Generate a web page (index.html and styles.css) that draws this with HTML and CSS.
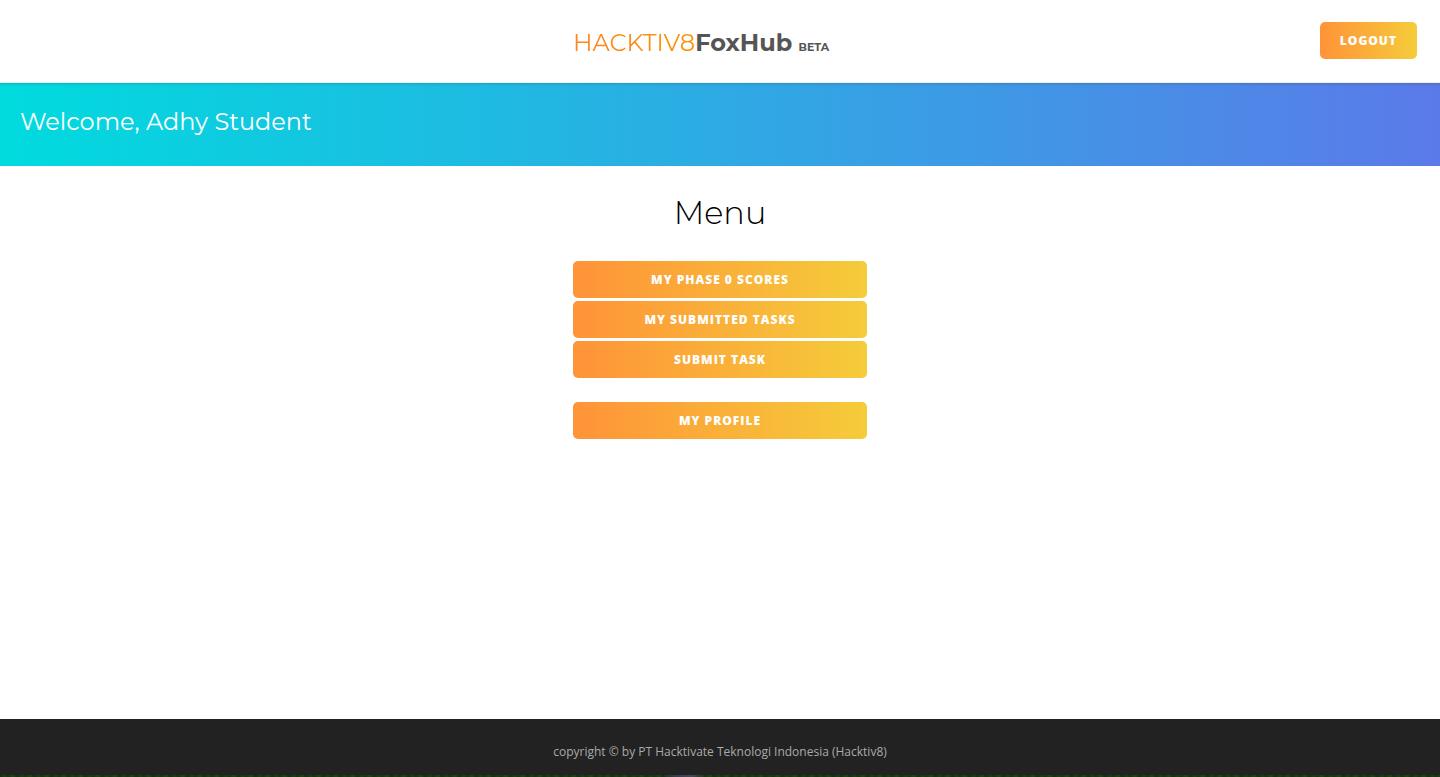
FILE: index.html
```html
<!DOCTYPE html>
<html lang="en">
<head>
  <meta charset="utf-8">
  <meta name="viewport" content="width=device-width, initial-scale=1">
  <title>Hacktiv8 FoxHub</title>
  <link rel="stylesheet" href="styles.css">
</head>
<body>
  <header class="topbar">
    <a class="brand" href="#"><span class="brand-org">HACKTIV8</span><span class="brand-name">FoxHub</span> <span class="brand-tag">BETA</span></a>
    <button class="btn logout" type="button">LOGOUT</button>
  </header>

  <section class="welcome">
    <h2 class="welcome-text">Welcome, Adhy Student</h2>
  </section>

  <main class="content">
    <h1 class="title">Menu</h1>
    <nav class="menu">
      <a class="btn" href="#">MY PHASE 0 SCORES</a>
      <a class="btn" href="#">MY SUBMITTED TASKS</a>
      <a class="btn" href="#">SUBMIT TASK</a>
      <a class="btn menu-profile" href="#">MY PROFILE</a>
    </nav>
  </main>

  <footer class="footer">
    <p class="copyright">copyright © by PT Hacktivate Teknologi Indonesia (Hacktiv8)</p>
  </footer>
  <div class="backdrop"></div>
</body>
</html>
```

FILE: styles.css
```css
* {
  box-sizing: border-box;
}

body {
  margin: 0;
  min-height: 100vh;
  display: flex;
  flex-direction: column;
  background: #fff;
  color: #000;
  font-family: "Open Sans", sans-serif;
  font-size: 12px;
}

.topbar {
  display: grid;
  grid-template-columns: 1fr 294px 1fr;
  align-items: start;
  padding: 22px 0 19px;
  border-bottom: 1px solid #f2eeee;
}

.brand {
  grid-column: 2;
  padding-top: 5px;
  color: #555;
  font-family: Montserrat, Inter, sans-serif;
  font-size: 24px;
  line-height: 32px;
  text-decoration: none;
  white-space: nowrap;
}

.brand-org {
  font-weight: 400;
  background: linear-gradient(to right, #fc8621, #f9920a);
  background-clip: text;
  color: transparent;
}

.brand-name {
  font-weight: 700;
}

.brand-tag {
  font-size: 11px;
  font-weight: 700;
}

.btn {
  display: block;
  padding: 10px 20px;
  border: 0;
  border-radius: 5px;
  background: linear-gradient(to right, #ff9338, #f5cc3a);
  color: #fff;
  font-family: "Open Sans", sans-serif;
  font-size: 12px;
  font-weight: 800;
  line-height: 17px;
  letter-spacing: 1px;
  text-align: center;
  text-decoration: none;
}

.logout {
  justify-self: end;
  margin-right: 23px;
}

.welcome {
  padding: 23px 20px 28px;
  background: linear-gradient(to right, #00dbde, #5b7ae9);
  box-shadow: inset 0 3px 3px -2px rgba(0, 0, 0, 0.15);
}

.welcome-text {
  margin: 0;
  color: #fff;
  font-family: Montserrat, Inter, sans-serif;
  font-size: 24px;
  font-weight: 400;
  line-height: 32px;
}

.content {
  flex: 1;
  display: flex;
  flex-direction: column;
  align-items: center;
  padding: 25px 0;
}

.title {
  margin: 0 0 26px;
  font-family: Montserrat, Inter, sans-serif;
  font-size: 32px;
  font-weight: 300;
  line-height: 44px;
}

.menu {
  display: flex;
  flex-direction: column;
  gap: 3px;
  width: 294px;
}

.menu-profile {
  margin-top: 21px;
}

.footer {
  padding: 24px 20px 15px;
  background: #222;
  color: #aaa;
  text-align: center;
}

.copyright {
  margin: 0;
  line-height: 17px;
}

.backdrop {
  height: 2px;
  background:
    linear-gradient(to right, transparent 46%, #3a3d50 47%, #48495a 48%, transparent 49%),
    repeating-linear-gradient(to right, #142c10 0, #1c3f14 5px, #15300f 8px, #204517 13px, #142c10 17px);
}
```
